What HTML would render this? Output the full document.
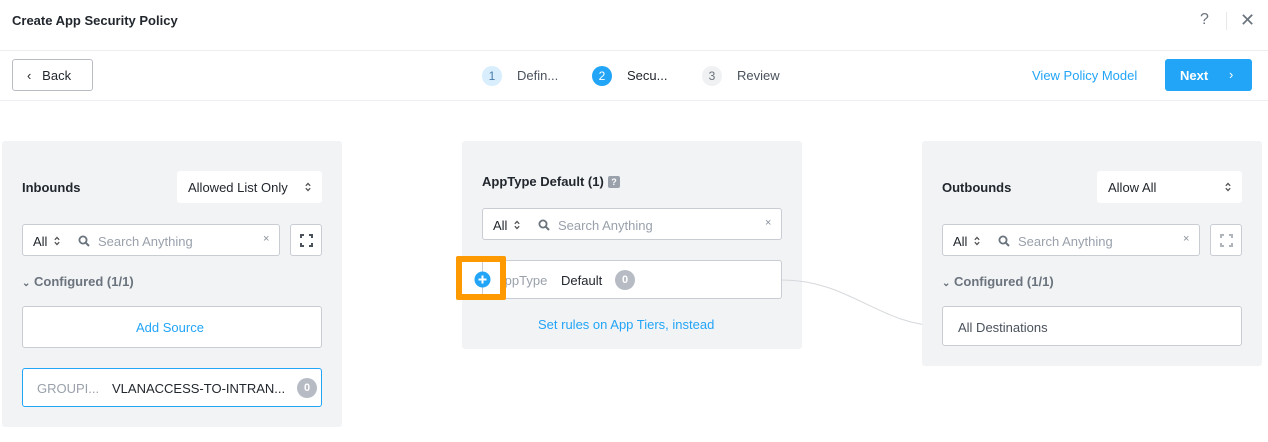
<!DOCTYPE html>
<html><head><style>
*{box-sizing:border-box;margin:0;padding:0}
body{width:1268px;height:442px;background:#fff;font-family:"Liberation Sans",sans-serif;position:relative;overflow:hidden;color:#22272e}
.a{position:absolute}
.panel{position:absolute;background:#f2f3f5;border-radius:3px}
.box{position:absolute;background:#fff;border:1px solid #c9cdd3;border-radius:3px}
.t{font-size:13px;white-space:nowrap}
.b{font-weight:bold}
.blue{color:#22a5f7}
.gray{color:#9aa1ab}
.badge{position:absolute;width:20px;height:20px;border-radius:50%;background:#b7bcc4;color:#fff;font-size:11px;font-weight:bold;text-align:center;line-height:20px}
.step{position:absolute;width:20px;height:20px;border-radius:50%;font-size:12px;text-align:center;line-height:20px}
</style></head><body>
<svg width="0" height="0" style="position:absolute"><defs>
<symbol id="ud" viewBox="0 0 6 10"><path d="M0.8 3.8 L3 1.5 L5.2 3.8 M0.8 6.2 L3 8.5 L5.2 6.2" fill="none" stroke="#555" stroke-width="1.3"/></symbol>
<symbol id="mag" viewBox="0 0 12 12"><circle cx="5" cy="5" r="3.6" fill="none" stroke="#6b737d" stroke-width="1.8"/><path d="M7.6 7.6 L11 11" stroke="#6b737d" stroke-width="2"/></symbol>
</defs></svg>
<div class="a t b" style="left:12px;top:13px">Create App Security Policy</div>
<div class="a" style="left:1200px;top:11px;font-size:16px;color:#6b737d">?</div>
<div class="a" style="left:1226px;top:12px;width:1px;height:18px;background:#e6e8eb"></div>
<div class="a" style="left:1240px;top:10px;font-size:18px;color:#6b737d">✕</div>
<div class="a" style="left:0;top:50px;width:1268px;height:1px;background:#eceef1"></div>
<div class="a" style="left:0;top:100px;width:1268px;height:1px;background:#eceef1"></div>

<div class="box" style="left:12px;top:59px;width:81px;height:32px;border-color:#b9bec5"><span class="a t" style="left:14px;top:8px">‹&nbsp;&nbsp; Back</span></div>
<div class="step" style="left:482px;top:66px;background:#d9eefd;color:#4a7ba8">1</div>
<div class="a t" style="left:517px;top:68px;color:#4a525c">Defin...</div>
<div class="step" style="left:592px;top:66px;background:#22a5f7;color:#fff">2</div>
<div class="a t" style="left:627px;top:68px">Secu...</div>
<div class="step" style="left:702px;top:66px;background:#f0f1f3;color:#6b737d">3</div>
<div class="a t" style="left:737px;top:68px;color:#4a525c">Review</div>
<div class="a t blue" style="left:1032px;top:68px">View Policy Model</div>
<div class="a" style="left:1165px;top:59px;width:87px;height:32px;background:#22a5f7;border-radius:3px;color:#fff"><span class="a t b" style="left:15px;top:9px">Next</span><span class="a t" style="left:64px;top:8px">›</span></div>

<!-- left panel -->
<div class="panel" style="left:2px;top:141px;width:340px;height:286px"></div>
<div class="a t b" style="left:22px;top:180px">Inbounds</div>
<div class="a" style="left:177px;top:171px;width:145px;height:32px;background:#fff;border-radius:3px"><span class="a t" style="left:11px;top:9px">Allowed List Only</span><svg class="a" style="left:128px;top:11px" width="6" height="10"><use href="#ud"/></svg></div>
<div class="box" style="left:22px;top:224px;width:258px;height:32px"><span class="a t" style="left:10px;top:9px">All</span><svg class="a" style="left:31px;top:11px" width="6" height="10"><use href="#ud"/></svg><svg class="a" style="left:55px;top:10px" width="12" height="12"><use href="#mag"/></svg><span class="a t gray" style="left:75px;top:9px">Search Anything</span><span class="a" style="left:240px;top:8px;font-size:11px;color:#8a9099">×</span></div>
<div class="box" style="left:290px;top:224px;width:32px;height:32px"><svg class="a" style="left:9px;top:9px" width="13" height="13"><path d="M1 4V1H4M9 1H12V4M12 9V12H9M4 12H1V9" fill="none" stroke="#4a525c" stroke-width="2"/></svg></div>
<div class="a t b" style="left:22px;top:274px;color:#6b737d"><span style="font-size:10px">⌄</span> Configured (1/1)</div>
<div class="box" style="left:22px;top:306px;width:300px;height:42px"><span class="a t blue" style="left:113px;top:13px">Add Source</span></div>
<div class="box" style="left:22px;top:368px;width:300px;height:39px;border-color:#22a5f7"><span class="a t gray" style="left:14px;top:12px">GROUPI...</span><span class="a t" style="left:89px;top:12px">VLANACCESS-TO-INTRAN...</span><span class="badge" style="left:274px;top:9px">0</span></div>

<!-- center panel -->
<div class="panel" style="left:462px;top:141px;width:340px;height:208px"></div>
<div class="a t b" style="left:482px;top:174px">AppType Default (1)</div>
<div class="a" style="left:608px;top:176px;width:12px;height:12px;background:#9aa1ab;border-radius:2px;color:#fff;font-size:9px;text-align:center;line-height:12px;font-weight:bold">?</div>
<div class="box" style="left:482px;top:208px;width:300px;height:32px"><span class="a t" style="left:10px;top:9px">All</span><svg class="a" style="left:31px;top:11px" width="6" height="10"><use href="#ud"/></svg><svg class="a" style="left:55px;top:10px" width="12" height="12"><use href="#mag"/></svg><span class="a t gray" style="left:75px;top:9px">Search Anything</span><span class="a" style="left:282px;top:8px;font-size:11px;color:#8a9099">×</span></div>
<div class="box" style="left:482px;top:260px;width:300px;height:39px"><span class="a t gray" style="left:13px;top:12px">AppType</span><span class="a t" style="left:78px;top:12px">Default</span><span class="badge" style="left:132px;top:9px">0</span></div>
<div class="a" style="left:456px;top:256px;width:50px;height:44px;border:6px solid #ff9900;background:#fff;border-radius:2px"></div>
<div class="a" style="left:482px;top:262px;width:1px;height:32px;background:#c9cdd3"></div>
<svg class="a" style="left:474px;top:271px" width="17" height="17"><circle cx="8.5" cy="8.5" r="8" fill="#22a5f7"/><path d="M8.5 4.5V12.5M4.5 8.5H12.5" stroke="#fff" stroke-width="2"/></svg>
<div class="a t blue" style="left:538px;top:317px">Set rules on App Tiers, instead</div>

<svg class="a" style="left:0;top:0" width="1268" height="442"><path d="M782 280 C 850 280, 880 326, 942 326" fill="none" stroke="#d5d8dc" stroke-width="1"/></svg>

<!-- right panel -->
<div class="panel" style="left:922px;top:141px;width:340px;height:225px"></div>
<div class="a t b" style="left:942px;top:180px">Outbounds</div>
<div class="a" style="left:1097px;top:171px;width:145px;height:32px;background:#fff;border-radius:3px"><span class="a t" style="left:11px;top:9px">Allow All</span><svg class="a" style="left:128px;top:11px" width="6" height="10"><use href="#ud"/></svg></div>
<div class="box" style="left:942px;top:224px;width:258px;height:32px"><span class="a t" style="left:10px;top:9px">All</span><svg class="a" style="left:31px;top:11px" width="6" height="10"><use href="#ud"/></svg><svg class="a" style="left:55px;top:10px" width="12" height="12"><use href="#mag"/></svg><span class="a t gray" style="left:75px;top:9px">Search Anything</span><span class="a" style="left:240px;top:8px;font-size:11px;color:#8a9099">×</span></div>
<div class="box" style="left:1210px;top:224px;width:32px;height:32px"><svg class="a" style="left:9px;top:9px" width="13" height="13"><path d="M1 4V1H4M9 1H12V4M12 9V12H9M4 12H1V9" fill="none" stroke="#b0b5bc" stroke-width="2"/></svg></div>
<div class="a t b" style="left:942px;top:274px;color:#6b737d"><span style="font-size:10px">⌄</span> Configured (1/1)</div>
<div class="box" style="left:942px;top:306px;width:300px;height:40px"><span class="a t" style="left:15px;top:13px;color:#4a525c">All Destinations</span></div>
</body></html>
